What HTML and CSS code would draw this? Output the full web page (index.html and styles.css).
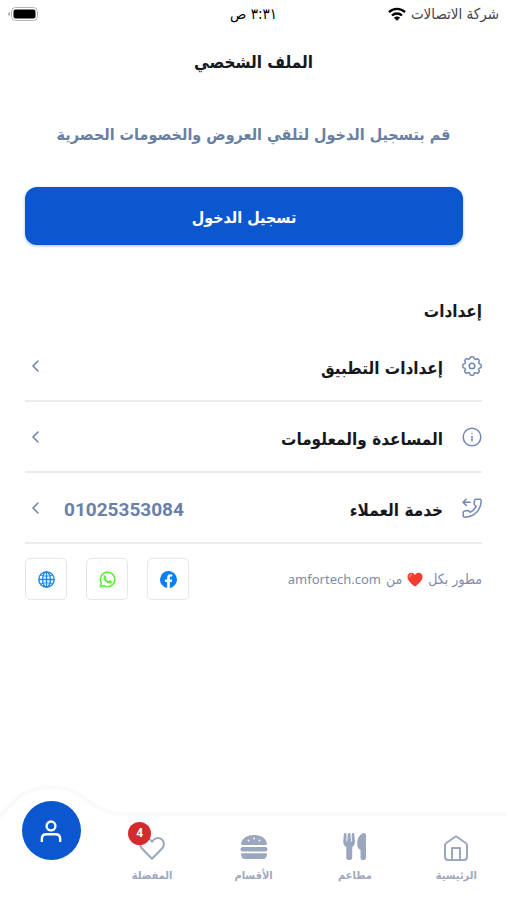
FILE: index.html
```html
<!DOCTYPE html>
<html lang="ar" dir="rtl">
<head>
<meta charset="utf-8">
<meta name="viewport" content="width=device-width, initial-scale=1">
<title>الملف الشخصي</title>
<link rel="stylesheet" href="styles.css">
</head>
<body>
<div class="status">
  <div class="carrier">
    <span>شركة الاتصالات</span>
    <svg class="wifi" viewBox="0 0 18 14" aria-hidden="true"><g fill="none" stroke="#000" stroke-width="2.4"><path d="M1 5.2C5.4.8 12.600.8 17 5.200"/><path d="M4 8.500C6.800 5.800 11.200 5.800 14 8.500"/></g><path d="M9 13.800L5.900 10.700C7.600 9.100 10.400 9.100 12.100 10.700Z"/></svg>
  </div>
  <time class="clock">٣:٣١ ص</time>
  <div class="power">
    <svg class="battery" viewBox="0 0 30 14" aria-hidden="true"><rect x="3.500" y=".5" width="26" height="13" rx="4" fill="#fff" stroke="#b5b5b5"/><rect x="5.500" y="2.500" width="22" height="9" rx="2"/><path d="M2 5v4Q0 8.500 0 7T2 5Z" fill="#aaa"/></svg>
  </div>
</div>
<main class="page">
  <h1 class="title">الملف الشخصي</h1>
  <p class="lead">قم بتسجيل الدخول لتلقي العروض والخصومات الحصرية</p>
  <button class="login" type="button">تسجيل الدخول</button>
  <h2 class="section">إعدادات</h2>
  <ul class="rows">
    <li><a class="row" href="#settings">
      <svg class="row-icon" viewBox="0 0 20 20" aria-hidden="true"><path d="M8.300 1.200Q10 .3 11.700 1.200Q12.100 3.400 13.200 3.500L15.300 2.700Q17 3.200 17.400 4.800L16.500 6.900Q16.600 7.900 18.800 8.400Q19.700 10 18.800 11.700Q16.600 12.100 16.500 13.200L17.300 15.300Q16.800 17 15.200 17.400L13.100 16.500Q12.100 16.600 11.700 18.800Q10 19.700 8.300 18.800Q7.900 16.600 6.800 16.500L4.700 17.300Q3 16.800 2.600 15.200L3.500 13.100Q3.400 12.100 1.200 11.700Q.3 10 1.200 8.300Q3.400 7.900 3.500 6.800L2.700 4.700Q3.200 3 4.800 2.600L6.900 3.500Q7.900 3.400 8.300 1.200Z"/><circle cx="10" cy="10" r="2.800"/></svg>
      <span class="label">إعدادات التطبيق</span>
      <svg class="chevron" viewBox="0 0 8 12" aria-hidden="true"><path d="M7 1L2 6L7 11"/></svg>
    </a></li>
    <li><a class="row" href="#help">
      <svg class="row-icon" viewBox="0 0 20 20" aria-hidden="true"><circle cx="10" cy="10" r="8.800"/><path d="M10 9.500v4.200M10 6.400v.2"/></svg>
      <span class="label">المساعدة والمعلومات</span>
      <svg class="chevron" viewBox="0 0 8 12" aria-hidden="true"><path d="M7 1L2 6L7 11"/></svg>
    </a></li>
    <li><a class="row" href="tel:01025353084">
      <svg class="row-icon" viewBox="0 0 20 20" aria-hidden="true"><path d="M13.800 1.200H17.800Q19.300 1.200 19.200 2.900C18.900 12 12.500 18.600 3.300 19.200Q1.300 19.300 1.200 17.700V14.600Q1.300 13.200 2.600 12.900L5.600 12.500Q6.600 12.500 7.300 13.300L8.200 14.300Q12.300 12 14.100 8.400L12.900 7.300Q12.100 6.500 12.200 5.500L12.500 2.500Q12.800 1.200 13.800 1.200ZM4.200 1.200L1 4.300L4.200 7.400M1 4.300H8.200"/></svg>
      <span class="label">خدمة العملاء</span>
      <span class="phone">01025353084</span>
      <svg class="chevron" viewBox="0 0 8 12" aria-hidden="true"><path d="M7 1L2 6L7 11"/></svg>
    </a></li>
  </ul>
  <div class="credits">
    <p class="made">مطور بكل
      <svg class="love" viewBox="0 0 16 15" aria-hidden="true"><path d="M8 14.600C5 12.300 .5 9 .5 4.800C.5 .5 6 -.8 8 3.200C10 -.8 15.500 .5 15.500 4.800C15.500 9 11 12.300 8 14.600Z" fill="#f43b2f"/><path d="M2.500 5Q2.500 2.500 4.800 2.300" fill="none" stroke="#ff8576" stroke-width="1.200" stroke-linecap="round"/></svg>
      من <bdi>amfortech.com</bdi></p>
    <div class="social">
      <a class="tile" href="#facebook" aria-label="Facebook"><svg viewBox="0 0 24 24" aria-hidden="true"><path fill="#0a80f5" d="M24 12A12 12 0 1 0 10.100 23.900V15.500H7.100V12H10.100V9.400C10.100 6.400 11.900 4.700 14.700 4.700Q16 4.700 17.300 5V7.900H15.800C14.300 7.900 13.900 8.900 13.900 9.800V12H17.200L16.600 15.500H13.900V23.900A12 12 0 0 0 24 12Z"/></svg></a>
      <a class="tile" href="#whatsapp" aria-label="WhatsApp"><svg viewBox="0 0 24 24" aria-hidden="true"><path fill="none" stroke="#5cf03a" stroke-width="2.200" stroke-linejoin="round" d="M1.800 22.200L3.300 16.900A10.200 10.200 0 1 1 7.200 20.800Z"/><path fill="#5cf03a" d="M7.500 6.400Q8.100 5.800 9 6.200L10.200 8.900Q10.200 9.500 9.200 10.500Q10.800 13.500 13.600 14.400L14.800 13Q15.200 12.700 15.700 13L18.200 14.300Q18.300 17.300 14.900 17.800Q12 17.900 8.600 14.400Q4.600 9.600 7.500 6.400Z"/></svg></a>
      <a class="tile" href="#web" aria-label="Web"><svg viewBox="0 0 24 24" aria-hidden="true"><g fill="none" stroke="#2387e8" stroke-width="2"><circle cx="12" cy="12" r="10.800"/><ellipse cx="12" cy="12" rx="5.500" ry="10.800"/><path d="M12 1V23M1 12H23"/><path stroke-width="1.200" d="M3.500 6Q12 9 20.500 6M3.500 18Q12 15 20.500 18"/></g></svg></a>
    </div>
  </div>
</main>
<nav class="tabs">
  <a class="tab" href="#home">
    <svg class="tab-icon" viewBox="0 0 28 28" aria-hidden="true"><g fill="none" stroke="#9ba6bf" stroke-width="2" stroke-linejoin="round"><path d="M3 12.200Q3 11 4 10.300L12.800 4Q14 3.200 15.200 4L24 10.300Q25 11 25 12.200V23.500Q25 27 21.500 27H6.500Q3 27 3 23.500Z"/><path d="M10 27V15H18V27" /></g></svg>
    <span>الرئيسية</span>
  </a>
  <a class="tab" href="#restaurants">
    <svg class="tab-icon" viewBox="0 0 28 28" aria-hidden="true"><g fill="#9ba6bf"><path d="M3 1Q3 0 4.200 0T5.500 1V8Q5.600 8.700 6.200 8.700L6.800 1Q7 0 8.200 0T9.500 1L10 8.700Q10.700 8.700 10.800 8V1Q11 0 12.200 0T13.300 1L14 8.500Q13.800 12.700 11.200 14V25Q11 27 9 27H7.500Q5.500 27 5.300 25V14Q2.400 12.700 2.200 8.500Z"/><path d="M22.500 0Q25 0 25 2V25Q25 27 23 27H21.500Q19.500 27 19.500 25V17Q16 15.500 16.200 10Q16.500 2.500 22.500 0Z"/></g></svg>
    <span>مطاعم</span>
  </a>
  <a class="tab" href="#categories">
    <svg class="tab-icon" viewBox="0 0 28 28" aria-hidden="true"><g fill="#9ba6bf"><path d="M2.500 12Q.8 12 1.200 10Q3.500 2 14 2T26.800 10Q27.200 12 25.500 12Z"/><rect x=".5" y="14" width="27" height="4.500" rx="2.200"/><path d="M2 20.200H26Q27 20.200 27 21.200Q27 26 22.500 26H5.500Q1 26 1 21.200Q1 20.200 2 20.200Z"/></g><g fill="#fff"><circle cx="8.500" cy="7.500" r=".9"/><circle cx="14" cy="5.500" r=".9"/><circle cx="19.500" cy="7.500" r=".9"/></g></svg>
    <span>الأقسام</span>
  </a>
  <a class="tab" href="#favourites">
    <span class="badge">4</span>
    <svg class="tab-icon" viewBox="0 0 28 28" aria-hidden="true"><path fill="none" stroke="#9ba6bf" stroke-width="2" stroke-linejoin="round" d="M14 25.800L4.200 15.800C1.300 12.700 1.500 8.900 4 6.600C7 4 11.200 4.600 14 8.600C16.800 4.600 21 4 24 6.600C26.500 8.900 26.700 12.700 23.800 15.800Z"/></svg>
    <span>المفضلة</span>
  </a>
  <a class="tab current" href="#profile" aria-label="الملف الشخصي" aria-current="page">
    <svg class="bump" viewBox="29 0 131 48" aria-hidden="true"><path fill="#fff" stroke="#fafafa" stroke-width="4" d="M0 60C18 52 26 40 34 32C45 19 56 8 80 8S114 21 128 29C137 33 143 35 160 35V60H0Z"/></svg>
    <span class="bubble"><svg viewBox="0 0 24 24" aria-hidden="true"><g fill="none" stroke="#fff" stroke-width="2.600"><circle cx="12" cy="6.500" r="4.800"/><path d="M2 24V20.500Q2 15.500 7 15.500H17Q22 15.500 22 20.500V24"/></g></svg></span>
  </a>
</nav>
</body>
</html>
```
FILE: styles.css
```css
* {
  box-sizing: border-box;
}

body {
  margin: 0;
  min-height: 100vh;
  display: flex;
  flex-direction: column;
  background: #fff;
  color: #16181d;
  font-family: "DejaVu Sans Condensed", "DejaVu Sans", sans-serif;
}

a {
  color: inherit;
  text-decoration: none;
}

svg {
  display: block;
  flex: none;
}

.status {
  display: grid;
  grid-template-columns: 1fr auto 1fr;
  align-items: center;
  height: 28px;
  padding: 0 8px;
  font-size: 15px;
  line-height: 20px;
}

.carrier {
  display: flex;
  align-items: center;
  gap: 5px;
  color: #444;
}

.wifi {
  width: 18px;
  height: 14px;
}

.clock {
  color: #000;
}

.power {
  display: flex;
  justify-content: flex-end;
}

.battery {
  width: 30px;
  height: 14px;
}

.page {
  flex: 1;
  padding: 0 25px;
}

.title {
  margin: 20px 0 0;
  font-size: 17px;
  line-height: 28px;
  text-align: center;
}

.lead {
  margin: 45px 0 0;
  color: #6a80a3;
  font-size: 16px;
  font-weight: 700;
  line-height: 28px;
  text-align: center;
}

.login {
  display: block;
  width: calc(100% - 19px);
  height: 58px;
  margin: 38px 19px 0 0;
  padding: 4px 0 0;
  border: 0;
  border-radius: 12px;
  background: #0a57d0;
  box-shadow: 0 1px 3px #0a57d066;
  color: #fff;
  font-family: inherit;
  font-size: 16px;
  font-weight: 700;
  line-height: 28px;
}

.section {
  margin: 52px 0 0;
  font-size: 17px;
  line-height: 28px;
}

.rows {
  margin: 6px 0 0;
  padding: 0;
  list-style: none;
}

.row {
  display: flex;
  align-items: center;
  height: 71px;
  border-bottom: 2px solid #ececee;
}

.row-icon {
  width: 20px;
  height: 20px;
  fill: none;
  stroke: #7288b4;
  stroke-width: 1.5;
  stroke-linejoin: round;
  stroke-linecap: round;
}

.label {
  flex: 1;
  margin-right: 19px;
  padding-top: 4px;
  font-size: 17px;
  font-weight: 700;
  line-height: 28px;
}

.phone {
  margin-left: 25px;
  padding-top: 4px;
  color: #6a80a8;
  font: 700 19px/28px Roboto, sans-serif;
}

.chevron {
  width: 8px;
  height: 12px;
  margin-left: 6px;
  fill: none;
  stroke: #7184ac;
  stroke-width: 1.6;
  stroke-linecap: round;
  stroke-linejoin: round;
}

.credits {
  display: flex;
  align-items: center;
  justify-content: space-between;
  padding-top: 14px;
}

.made {
  display: flex;
  align-items: center;
  gap: 5px;
  margin: 0;
  color: #7d8cab;
  font-size: 14px;
  line-height: 20px;
}

.made bdi {
  font-family: "Noto Sans", sans-serif;
  font-size: 13px;
}

.love {
  width: 16px;
  height: 15px;
}

.social {
  display: flex;
  gap: 19px;
}

.tile {
  display: grid;
  place-items: center;
  width: 42px;
  height: 42px;
  border: 1px solid #e6e6e8;
  border-radius: 5px;
}

.tile svg {
  width: 17px;
  height: 17px;
}

.tabs {
  display: grid;
  grid-template-columns: repeat(5, 1fr);
  height: 88px;
  border-top: 4px solid #fafafa;
}

.tab {
  position: relative;
  display: flex;
  flex-direction: column;
  align-items: center;
  padding-top: 17px;
  gap: 5px;
  color: #a0a8bc;
  font-size: 11px;
  font-weight: 700;
  line-height: 20px;
}

.tab:not(.current) {
  z-index: 1;
}

.tab-icon {
  width: 28px;
  height: 28px;
}

.badge {
  position: absolute;
  z-index: 1;
  top: 6px;
  left: calc(50% - 24px);
  width: 23px;
  height: 23px;
  border-radius: 50%;
  background: #d22c2f;
  color: #fff;
  font: 700 12px/23px Roboto, sans-serif;
  text-align: center;
}

.bump {
  position: absolute;
  top: -37px;
  left: 0;
  width: 131px;
  height: 48px;
}

.bubble {
  position: absolute;
  top: -15px;
  left: calc(50% - 29px);
  display: grid;
  place-items: center;
  width: 59px;
  height: 59px;
  border-radius: 50%;
  background: #0a57d0;
}

.bubble svg {
  width: 22px;
  height: 24px;
}
```
